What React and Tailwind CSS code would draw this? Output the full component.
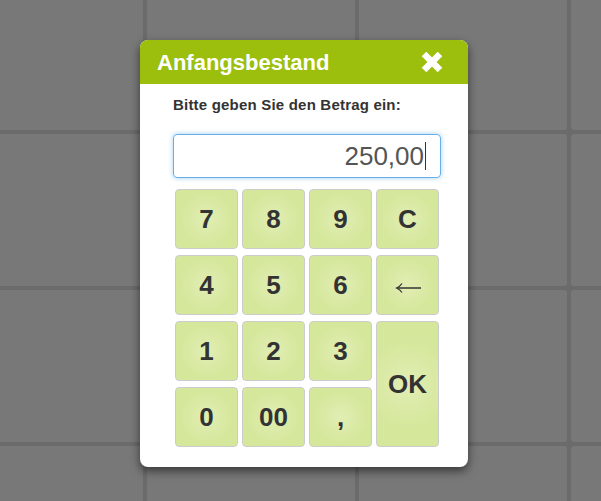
import React, { useState } from "react";

const keys = [
  { label: "7" },
  { label: "8" },
  { label: "9" },
  { label: "C" },
  { label: "4" },
  { label: "5" },
  { label: "6" },
  { label: "←", arrow: true },
  { label: "1" },
  { label: "2" },
  { label: "3" },
  { label: "OK", tall: true },
  { label: "0" },
  { label: "00" },
  { label: "," },
];

function CloseIcon() {
  return (
    <svg width="24" height="22" viewBox="0 0 24 22">
      <path d="M4 3 L20 19 M20 3 L4 19" stroke="#fff" strokeWidth="6.5" strokeLinecap="butt" />
    </svg>
  );
}

function ArrowLeft() {
  return (
    <svg width="26" height="12" viewBox="0 0 26 12" className="mt-[6px]">
      <path d="M2 6 H26" stroke="#333" strokeWidth="1.3" fill="none" />
      <path d="M7 1.5 Q5 4.5 1.5 6 Q5 7.5 7 10.5" stroke="#333" strokeWidth="1.3" fill="none" />
    </svg>
  );
}

export default function App() {
  const [betrag, setBetrag] = useState("250,00");

  const press = (k) => {
    if (k === "C") return setBetrag("");
    if (k === "←") return setBetrag((v) => v.slice(0, -1));
    if (k === "OK") return;
    setBetrag((v) => v + k);
  };

  return (
    <div className="relative h-[501px] w-[601px] overflow-hidden bg-[#6b6b6b] font-['Liberation_Sans',Arial,sans-serif]">
      {/* Hintergrund-Kacheln */}
      <div className="ml-[-65px] mt-[-22px] grid grid-cols-[repeat(4,208px)] grid-rows-[repeat(4,152px)] gap-[4px]">
        {Array.from({ length: 16 }).map((_, i) => (
          <div key={i} className="rounded-[3px] bg-[#787878]" />
        ))}
      </div>

      {/* Dialog */}
      <div className="absolute left-[140px] top-[40px] flex h-[427px] w-[328px] flex-col overflow-hidden rounded-[8px] bg-white shadow-[0_4px_10px_rgba(0,0,0,0.55)]">
        <div className="flex h-[44px] shrink-0 items-center justify-between bg-[#9bbf0c] pl-[17px] pr-[24px]">
          <span className="text-[22px] font-bold text-white">Anfangsbestand</span>
          <CloseIcon />
        </div>

        <div className="flex flex-col pl-[33px] pr-[27px]">
          <p className="mt-[12px] text-[15px] font-bold leading-[17px] tracking-[0.2px] text-[#333]">
            Bitte geben Sie den Betrag ein:
          </p>

          <div className="mt-[21px] flex h-[44px] items-center justify-end rounded-[4px] border border-[#66afe9] pr-[14px] shadow-[0_0_5px_rgba(102,175,233,0.6)]">
            <span className="text-[26px] leading-none text-[#555]">{betrag}</span>
            <span className="ml-[1px] h-[28px] w-px bg-[#333]" />
          </div>

          <div className="ml-[2px] mt-[11px] grid grid-cols-[repeat(4,63px)] grid-rows-[repeat(4,60px)] gap-x-[4px] gap-y-[6px]">
            {keys.map((k) => (
              <button
                key={k.label}
                type="button"
                aria-label={k.label}
                onClick={() => press(k.label)}
                className={`flex items-center justify-center rounded-[4px] border border-[#cccccc] bg-[radial-gradient(circle,#e1eeb4_0%,#d5e79b_65%)] text-[26px] font-bold text-[#333] ${
                  k.tall ? "row-span-2" : ""
                }`}
              >
                {k.arrow ? <ArrowLeft /> : k.label}
              </button>
            ))}
          </div>
        </div>
      </div>
    </div>
  );
}
